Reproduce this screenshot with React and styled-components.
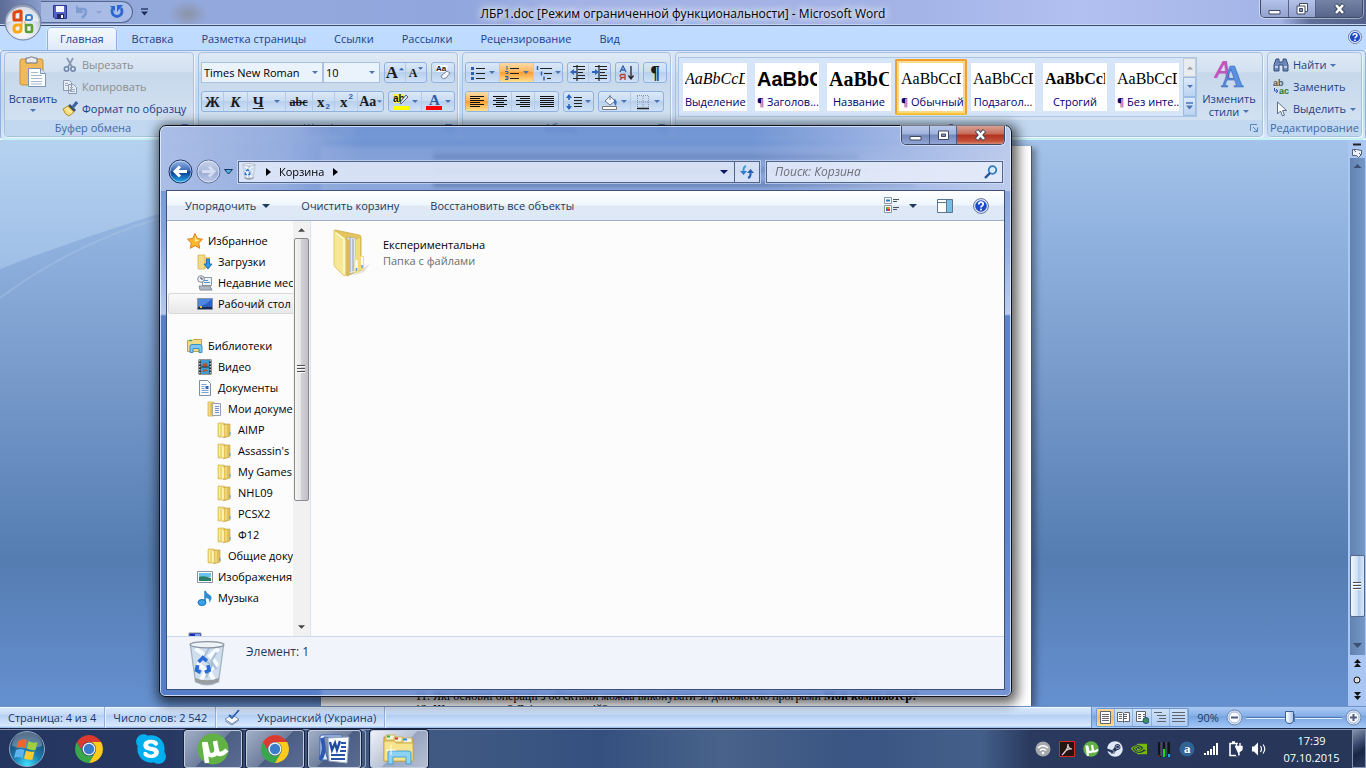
import React from "react";
import styled, { createGlobalStyle, css } from "styled-components";
import { FaSkype, FaSteam } from "react-icons/fa";
import { SiNvidia } from "react-icons/si";

const GlobalStyle = createGlobalStyle`
  * { box-sizing: border-box; }
  body {
    margin: 0;
    overflow: hidden;
    font-family: "Open Sans", "Noto Sans", sans-serif;
    font-size: 11px;
    line-height: 16px;
    color: #000;
  }
  button, input, select {
    font: inherit;
    color: inherit;
    margin: 0;
    padding: 0;
    border: 0;
    background: none;
  }
  a { color: inherit; text-decoration: none; }
  svg { display: block; flex: none; }
`;

const Desktop = styled.div`
  position: relative;
  display: flex;
  flex-direction: column;
  height: 100vh;
  overflow: hidden;
`;

/* ---------- Word ---------- */

const WordWindow = styled.main`
  flex: 1;
  min-height: 0;
  display: flex;
  flex-direction: column;
`;

const TitleBar = styled.header`
  display: flex;
  justify-content: space-between;
  align-items: flex-start;
  height: 26px;
  border-bottom: 1px solid #3b4a66;
  box-shadow: inset 0 -1px #c6d6f4;
  background:
    radial-gradient(ellipse 20px 14px at 188px 14px, #8c93a8, transparent),
    linear-gradient(90deg, #5b6c95 0, #8a9ccb 40px, #93a9dc 140px, #93a9dd 330px, #8fa5dc 450px, #a2b2e4 560px, #a3b3e6 900px, #b1c0f0 1080px, #a3b4e6 1280px, #5e6f98 1310px, #52628a 100%);
`;

const QuickBar = styled.div`
  display: flex;
  align-items: center;
  gap: 8px;
  width: 170px;
  height: 24px;
  padding-left: 41px;
`;

const QuickPill = styled.div`
  display: flex;
  align-items: center;
  gap: 8px;
  width: 92px;
  height: 22px;
  padding-left: 12px;
  border: 1px solid #57688f;
  border-left: 0;
  border-radius: 0 11px 11px 0;
  background: rgba(190, 207, 243, 0.55);
`;

const WordTitle = styled.h1`
  margin: 0;
  padding-top: 6px;
  font-size: 12px;
  font-weight: 400;
  line-height: 16px;
  white-space: nowrap;
  text-shadow: 0 0 6px #fff, 0 0 8px #dfe8ff, 0 0 10px #dfe8ff;
`;

const WordCaption = styled.div`
  display: flex;
  justify-content: flex-end;
  width: 170px;
  padding-right: 3px;
`;

const CaptionGroup = styled.div`
  display: flex;
  height: ${(p) => (p.$dark ? 18 : 19)}px;
  border: 1px solid #3d4a69;
  border-top: 0;
  border-radius: 0 0 5px 5px;
  overflow: hidden;
  box-shadow: 0 0 0 1px rgba(255, 255, 255, 0.45);
`;

const CaptionButton = styled.button`
  display: flex;
  align-items: center;
  justify-content: center;
  width: ${(p) => p.$w}px;
  border-right: 1px solid rgba(50, 62, 95, 0.7);
  background: ${(p) =>
    p.$tone === "red"
      ? "linear-gradient(#d9a093, #c66a58 45%, #b0301c 50%, #c4533a 85%, #d88a70)"
      : p.$tone === "dark"
        ? "linear-gradient(#7583a5, #56658a)"
        : p.$tone === "light"
          ? "linear-gradient(#b2c2e8, #93a3cf)"
          : "linear-gradient(#b9c8ea, #9fb1dc 45%, #7487b9 50%, #92a6d6)"};
  &:last-child { border-right: 0; }
`;

const OfficeButton = styled.button`
  position: absolute;
  left: 4px;
  top: 3px;
  width: 38px;
  height: 38px;
  border-radius: 50%;
  cursor: pointer;
`;

const Tabs = styled.nav`
  display: flex;
  gap: 4px;
  align-items: flex-end;
  height: 24px;
  padding-left: 48px;
  background: #bfdbff;
  color: #1c3f8a;
`;

const Tab = styled.a`
  height: 22px;
  padding: 3px 12px 0;
  white-space: nowrap;
  ${(p) =>
    p.$active &&
    css`
      background: linear-gradient(#f4f9ff, #dfeaf8);
      border-radius: 4px 4px 0 0;
      box-shadow: 0 0 0 1px #8db2e3, 0 0 3px 1px #fff;
      clip-path: inset(-2px -2px 0 -2px);
    `}
`;

const HelpLink = styled.a`
  margin: 0 4px 6px auto;
`;

const Ribbon = styled.section`
  display: flex;
  gap: 4px;
  height: 90px;
  padding: 1px 3px;
  border: 1px solid #8db2e3;
  border-bottom: 2px solid #c6f1f5;
  border-radius: 4px;
  background: linear-gradient(#dce7f5, #c9daed 40%, #c5d7ec 60%, #d7e6f8);
`;

const Group = styled.section`
  display: flex;
  flex-direction: column;
  flex: ${(p) => (p.$grow ? "1 1 0" : `0 0 ${p.$w}px`)};
  min-width: 0;
  border: 1px solid #a6c2e2;
  border-radius: 4px;
  box-shadow: 1px 1px 0 #eef5fd;
  background: linear-gradient(#dfe9f5, #d3e1f0 22%, #c7d8eb 24%, #d5e4f4);
  overflow: hidden;
`;

const GroupBody = styled.div`
  flex: 1;
  min-height: 0;
  display: flex;
  flex-direction: ${(p) => (p.$stack ? "column" : "row")};
  gap: ${(p) => p.$gap || 0}px;
  padding: ${(p) => p.$pad || "4px"};
`;

const GroupLabel = styled.h2`
  display: flex;
  align-items: center;
  justify-content: center;
  height: 16px;
  margin: 0;
  padding-right: ${(p) => (p.$launcher ? 4 : 0)}px;
  font-size: 11px;
  font-weight: 400;
  line-height: 14px;
  color: #3e6aaa;
  background: #c1d8f0;
  white-space: nowrap;
`;

const LabelText = styled.span`
  flex: 1;
  text-align: center;
`;

const BigButton = styled.button`
  display: flex;
  flex-direction: column;
  align-items: center;
  gap: 4px;
  width: ${(p) => p.$w}px;
  padding-top: ${(p) => p.$top}px;
  line-height: 13px;
  color: #1c3f8a;
`;

const SplitLabel = styled.span`
  display: flex;
  align-items: center;
  justify-content: center;
  gap: 4px;
`;

const CommandList = styled.div`
  display: flex;
  flex-direction: column;
`;

const Command = styled.button`
  display: flex;
  align-items: center;
  gap: 4px;
  height: 22px;
  white-space: nowrap;
  color: ${(p) => (p.disabled ? "#8d8d8d" : "#1c3f8a")};
`;

const ToolRow = styled.div`
  display: flex;
  gap: 4px;
  height: 21px;
`;

const ComboCell = styled.label`
  display: grid;
  width: ${(p) => p.$w}px;
  align-items: center;
  border: 1px solid #abc1de;
  background: #eaf2fb;
  & + & { margin-left: -4px; }
  & > * { grid-area: 1 / 1; }
  & > svg { justify-self: end; margin-right: 4px; pointer-events: none; }
`;

const Combo = styled.select`
  appearance: none;
  width: 100%;
  padding-left: 2px;
  outline: 0;
`;

const ToolSet = styled.div`
  display: flex;
  border: 1px solid #8fb2de;
  border-radius: 3px;
  background: linear-gradient(#dbe8f7, #c9dcf2 45%, #b9d0ec 50%, #cfe1f6);
  overflow: hidden;
`;

const Tool = styled.button`
  display: flex;
  align-items: center;
  justify-content: center;
  gap: ${(p) => p.$gap || 3}px;
  width: ${(p) => p.$w}px;
  font: bold ${(p) => p.$size || 15}px/18px "Liberation Serif", serif;
  color: #1b1b1b;
  border-right: 1px solid #b3cbe8;
  &:last-child { border-right: 0; }
  ${(p) => p.$on && "background: linear-gradient(#fbdca6, #fdb75c 45%, #fb9f35 50%, #fee08f);"}
`;

const SmallTwo = styled.span`
  align-self: ${(p) => (p.$up ? "flex-start" : "flex-end")};
  font: bold 8px/9px "Liberation Sans", sans-serif;
  color: #2f60ad;
`;

const RaisedArrow = styled.span`
  align-self: flex-start;
  padding-top: 4px;
`;

const Gallery = styled.div`
  display: flex;
  flex: 1;
  min-width: 0;
  height: 60px;
  border: 1px solid #a9c6e8;
  background: #d6e6f8;
`;

const StyleCell = styled.button`
  flex: 0 0 72px;
  min-width: 0;
  height: 56px;
  margin-top: 1px;
  padding: ${(p) => (p.$on ? "2px 2px" : "3px 3px")};
  border: ${(p) => (p.$on ? "2px solid #f0a02c" : "1px solid transparent")};
  border-radius: 2px;
  border-bottom-color: ${(p) => (p.$on ? "#fbc832" : "transparent")};
  background: ${(p) => (p.$on ? "#fdd98a" : "none")};
`;

const StyleTile = styled.span`
  display: flex;
  flex-direction: column;
  justify-content: space-between;
  height: 100%;
  overflow: hidden;
  padding: 0 2px;
  background: #fff;
`;

const Preview = styled.span`
  height: 30px;
  overflow: hidden;
  white-space: nowrap;
  text-align: left;
  font: ${(p) => p.$font};
  line-height: 32px;
`;

const StyleName = styled.span`
  font-size: 11px;
  line-height: 18px;
  white-space: nowrap;
  text-align: center;
  color: #00006d;
`;

const GalleryScroll = styled.div`
  display: flex;
  flex-direction: column;
  width: 15px;
  margin-left: auto;
`;

const GalleryStep = styled.button`
  flex: 1;
  display: flex;
  align-items: center;
  justify-content: center;
  border: 1px solid ${(p) => (p.disabled ? "#c9cdd3" : "#9dbce3")};
  background: ${(p) => (p.disabled ? "#e8ebef" : "linear-gradient(#dbe9fa, #bbd3f1)")};
`;

const DocumentArea = styled.section`
  flex: 1;
  min-height: 0;
  display: grid;
  grid-template-columns: 321fr 711fr 316fr 18px;
  background: linear-gradient(#a4c3ea, #8fb1de 18%, #7497c8 45%, #557db2 74%, #6590cf);
`;

const Waves = styled.svg`
  width: 100%;
  height: 200px;
`;

const Page = styled.article`
  display: flex;
  flex-direction: column;
  justify-content: flex-end;
  margin-top: 6px;
  overflow: hidden;
  border-right: 1px solid #555;
  box-shadow: 4px 2px 6px rgba(0, 0, 0, 0.35);
  background:
    linear-gradient(#777, #777) 112px 5px / 68% 1px no-repeat,
    linear-gradient(#777, #777) 112px 9px / 60% 4px no-repeat,
    linear-gradient(#888, #888) 112px 22px / 75% 4px no-repeat,
    linear-gradient(#666, #666) 112px 36px / 68% 5px no-repeat,
    #fff;
`;

const Questions = styled.ol`
  margin: 0 0 -10px;
  padding-left: 112px;
  font: 12px/13px "Liberation Serif", serif;
  white-space: nowrap;
`;

const VerticalScroll = styled.div`
  grid-column: 4;
  display: flex;
  flex-direction: column;
  align-items: center;
  background: #a9c7f2;
`;

const ScrollTrack = styled.div`
  flex: 1;
  display: flex;
  flex-direction: column;
  align-items: center;
  width: 15px;
  padding: 6px 0;
  background: linear-gradient(90deg, #6283b1, #7598c8);
`;

const DocThumb = styled.div`
  display: flex;
  align-items: center;
  justify-content: center;
  width: 15px;
  height: 62px;
  margin-top: auto;
  border: 1px solid #52688f;
  border-radius: 2px;
  background: linear-gradient(90deg, #eef5fd, #d0e0f4 50%, #b0cbec 55%, #dbe9f9);
`;

const BrowseButtons = styled.div`
  display: flex;
  flex-direction: column;
  align-items: center;
  gap: 8px;
  height: 51px;
  padding-top: 4px;
`;

const StatusBar = styled.footer`
  display: flex;
  align-items: stretch;
  height: 22px;
  line-height: 20px;
  color: #1b3766;
  white-space: nowrap;
  border-top: 1px solid #6e93c8;
  box-shadow: inset 0 1px #eef6ff;
  background: linear-gradient(#d9e8fb, #c7dcf8 35%, #b4d0f5 40%, #d9e9fd 90%, #8fb4e4);
`;

const StatusCell = styled.div`
  display: flex;
  align-items: center;
  gap: 16px;
  padding: 0 8px;
  border-right: 1px solid #8fb0dd;
  box-shadow: 1px 0 #eaf3ff;
`;

const StatusControls = styled.div`
  display: flex;
  align-items: center;
  gap: 4px;
  margin-left: auto;
  width: 275px;
  padding-left: 4px;
  border-left: 1px solid #6c93ca;
  background: linear-gradient(#a9c9f3, #88b1e8 40%, #78a5e2 45%, #a4c8f5);
`;

const ViewSet = styled.div`
  display: flex;
  width: 93px;
  height: 19px;
  border: 1px solid #6f97d0;
  border-radius: 2px;
  overflow: hidden;
`;

const ViewButton = styled.button`
  flex: 1;
  display: flex;
  align-items: center;
  justify-content: center;
  border-right: 1px solid #8eb2e0;
  background: ${(p) => (p.$on ? "linear-gradient(#fbd9a0, #fdbb60 50%, #fee38f)" : "linear-gradient(#cfe1f8, #b0cdf2)")};
`;

const ZoomText = styled.button`
  width: 30px;
  color: #1b3766;
`;

const RoundButton = styled.button`
  display: flex;
  margin: 0 -1px;
`;

const ZoomSlider = styled.input`
  appearance: none;
  width: 96px;
  height: 18px;
  outline: 0;
  background:
    linear-gradient(#4d74ad, #4d74ad) 50% 50% / 1px 8px no-repeat,
    linear-gradient(#4d74ad 50%, #e6f1ff 50%) 50% 50% / 100% 2px no-repeat;
  &::-webkit-slider-thumb {
    appearance: none;
    width: 9px;
    height: 13px;
    border: 1px solid #3d5f96;
    border-radius: 1px 1px 5px 5px;
    background: linear-gradient(90deg, #fff, #a9c5ea);
  }
`;

/* ---------- Explorer ---------- */

const ExplorerWindow = styled.section`
  position: absolute;
  inset: 125px 354px 71px 159px;
  display: flex;
  flex-direction: column;
  padding: 0 6px 6px;
  border: 1px solid #10131f;
  border-radius: 7px 7px 6px 6px;
  box-shadow: inset 0 0 0 1px rgba(235, 243, 255, 0.75), 2px 3px 12px 4px rgba(0, 0, 0, 0.6);
  backdrop-filter: blur(2px);
  background:
    linear-gradient(100deg, rgba(190, 203, 236, 0.75) 0, rgba(170, 187, 228, 0.6) 130px, rgba(110, 145, 210, 0) 200px) 0 0 / 100% 65px no-repeat,
    linear-gradient(260deg, rgba(200, 212, 240, 0.85) 0, rgba(180, 196, 236, 0.7) 110px, rgba(110, 145, 210, 0) 260px) 0 0 / 100% 65px no-repeat,
    linear-gradient(rgba(100, 137, 206, 0.85), rgba(100, 137, 206, 0.75) 64px, rgba(140, 168, 224, 0.9) 120px, rgba(185, 203, 238, 0.95) 188px, rgba(86, 126, 198, 0.95) 190px, rgba(84, 124, 197, 0.95) 400px, rgba(84, 122, 200, 0.8));
`;

const ExplorerCaption = styled.div`
  display: flex;
  justify-content: flex-end;
  align-items: flex-start;
  height: 34px;
`;

const AddressRow = styled.div`
  display: flex;
  align-items: center;
  gap: 6px;
  height: 23px;
  margin-bottom: 7px;
  padding: 0 2px;
`;

const NavButtons = styled.div`
  display: flex;
  align-items: center;
  width: 64px;
  gap: 3px;
`;

const AddressBox = styled.div`
  flex: 7 1 0;
  display: flex;
  align-items: center;
  height: 22px;
  border: 1px solid #52648c;
  box-shadow: 0 0 0 1px rgba(220, 230, 250, 0.6);
  background: rgba(232, 238, 251, 0.82);
`;

const Crumb = styled.button`
  display: flex;
  align-items: center;
  gap: 9px;
  padding-left: ${(p) => p.$pad || 0}px;
`;

const HistoryButton = styled.button`
  display: flex;
  margin-left: auto;
  padding: 4px 6px;
`;

const RefreshButton = styled.button`
  display: flex;
  align-items: center;
  justify-content: center;
  width: 25px;
  height: 20px;
  border-left: 1px solid #52648c;
`;

const SearchBox = styled.label`
  flex: 3 1 0;
  display: flex;
  align-items: center;
  height: 22px;
  padding: 0 4px 0 8px;
  border: 1px solid #52648c;
  box-shadow: 0 0 0 1px rgba(220, 230, 250, 0.6);
  background: rgba(234, 240, 252, 0.85);
`;

const SearchInput = styled.input`
  flex: 1;
  min-width: 0;
  outline: 0;
  font-size: 12px;
  font-style: italic;
  &::placeholder { color: #6d6f78; opacity: 1; }
`;

const ExplorerContent = styled.div`
  flex: 1;
  min-height: 0;
  display: flex;
  flex-direction: column;
  border: 1px solid #3e5076;
  background: #fcfcfc;
`;

const CommandBar = styled.div`
  display: flex;
  align-items: center;
  gap: 31px;
  height: 30px;
  padding: 0 15px 0 18px;
  color: #1e395b;
  white-space: nowrap;
  border-bottom: 1px solid #a0afc3;
  background: linear-gradient(#fff, #eef6fc 48%, #dfe9f6 52%, #dde8f6);
`;

const BarButton = styled.button`
  display: flex;
  align-items: center;
  gap: ${(p) => p.$gap || 6}px;
  white-space: nowrap;
`;

const BarTools = styled.div`
  display: flex;
  align-items: center;
  gap: 20px;
  margin-left: auto;
`;

const Panes = styled.div`
  flex: 1;
  min-height: 0;
  display: flex;
`;

const TreePane = styled.nav`
  display: flex;
  width: 144px;
  border-right: 1px solid #d6e5f5;
`;

const Tree = styled.ul`
  flex: 1;
  min-width: 0;
  margin: 0;
  padding: 9px 0 0;
  overflow: hidden;
  list-style: none;
`;

const TreeItem = styled.li`
  height: 21px;
  margin-top: ${(p) => (p.$section ? 21 : 0)}px;
`;

const TreeLink = styled.a`
  display: flex;
  align-items: center;
  gap: 5px;
  height: 21px;
  margin-left: 1px;
  padding-left: ${(p) => 18 + p.$level * 10}px;
  white-space: nowrap;
  border: 1px solid ${(p) => (p.$on ? "#d9d9d9" : "transparent")};
  border-right: 0;
  border-radius: 3px 0 0 3px;
  background: ${(p) => (p.$on ? "linear-gradient(#fafafa, #e8e8e8)" : "none")};
`;

const PaneScroll = styled.div`
  display: flex;
  flex-direction: column;
  align-items: center;
  width: 17px;
  padding: 7px 1px 7px 0;
  background: #f1f1f1;
`;

const PaneThumb = styled.div`
  display: flex;
  align-items: center;
  justify-content: center;
  width: 15px;
  height: 263px;
  margin: 6px 0 auto;
  border: 1px solid #8b8b8f;
  border-radius: 2px;
  background: linear-gradient(90deg, #f6f6f6, #e6e6e9 45%, #d0d0d5 50%, #c0c0c6);
`;

const Files = styled.div`
  flex: 1;
  min-width: 0;
  padding: 7px 0 0 21px;
`;

const FileItem = styled.button`
  display: flex;
  align-items: flex-start;
  gap: 11px;
  text-align: left;
`;

const FileText = styled.span`
  display: flex;
  flex-direction: column;
  padding-top: 9px;
`;

const FileType = styled.span`
  color: #6d6d6d;
`;

const DetailsPane = styled.footer`
  display: flex;
  gap: 20px;
  height: 53px;
  padding: 3px 0 0 21px;
  font-size: 12px;
  color: #1e395b;
  border-top: 1px solid #ccd9ea;
  background: #f1f5fb;
`;

const DetailsText = styled.p`
  margin: 0;
  padding-top: 4px;
`;

/* ---------- Taskbar ---------- */

const TaskBar = styled.footer`
  display: flex;
  align-items: center;
  gap: 4px;
  height: 40px;
  padding-left: 7px;
  border-top: 1px solid #1a2340;
  box-shadow: inset 0 1px #7f96b8;
  background: linear-gradient(90deg, #24365f, #273963 170px, #40587f 300px, #3f5983 460px, #35507f 600px, #48628a 720px, #3a5483 860px, #44608a 980px, #2a3a5e 1030px, #27365a 1200px, #273758);
`;

const StartButton = styled.button`
  width: 49px;
`;

const TaskButton = styled.button`
  display: flex;
  align-items: center;
  justify-content: center;
  width: ${(p) => p.$w || 58}px;
  height: 38px;
  border-radius: 3px;
  ${(p) =>
    p.$open &&
    css`
      border: 1px solid #c3cde0;
      box-shadow: 0 0 0 1px #17223e;
      background: ${p.$active
        ? "linear-gradient(135deg, #eff2f7, #b9c3d6 50%, #98a5bf 51%, #b4bfd2)"
        : "linear-gradient(135deg, #a3afc8, #6d7d9b 50%, #4d5e84 51%, #5b6c92)"};
    `}
`;

const TaskStack = styled.div`
  display: flex;
  padding-right: 4px;
  height: 38px;
  border: 1px solid #97a4c0;
  border-left: 0;
  border-radius: 0 3px 3px 0;
  & > button { margin: -1px 0; }
`;

const Tray = styled.div`
  display: flex;
  align-items: center;
  height: 100%;
  margin-left: auto;
`;

const TrayButton = styled.button`
  display: flex;
  align-items: center;
  justify-content: center;
  width: 24px;
  height: 24px;
`;

const Clock = styled.time`
  width: 81px;
  text-align: center;
  line-height: 17px;
  color: #fff;
`;

const ShowDesktop = styled.button`
  width: 14px;
  height: 100%;
  border: 1px solid #8494b0;
  background: linear-gradient(150deg, #8492ab, #35456a 40%, #1a2644 60%, #2b3a60);
`;

/* ---------- Drawings ---------- */

const Icon = ({ w = 16, h = w, box, children }) => (
  <svg width={w} height={h} viewBox={box || `0 0 ${w} ${h}`} fill="none" aria-hidden="true">
    {children}
  </svg>
);

const Arrow = ({ color = "#4a74b4", w = 6 }) => (
  <Icon w={w} h={Math.ceil(w / 2)} box="0 0 6 3">
    <path d="M0 0h6L3 3z" fill={color} />
  </Icon>
);

const ArrowUp = ({ color = "#444", w = 7 }) => (
  <Icon w={w} h={4} box="0 0 8 4">
    <path d="M4 0l4 4H0z" fill={color} />
  </Icon>
);

const BarArrow = ({ color = "#4a74b4" }) => (
  <Icon w={7} h={8}>
    <path d="M0 1h7" stroke={color} strokeWidth="1.3" />
    <path d="M0 3.5h7L3.5 7.5z" fill={color} />
  </Icon>
);

const Grip = () => (
  <Icon w={8} h={9}>
    <path d="M0 .5h8M0 3.5h8M0 6.5h8" stroke="#4b4b50" />
    <path d="M0 1.5h8M0 4.5h8M0 7.5h8" stroke="#fff" />
  </Icon>
);

const OfficeLogo = () => (
  <Icon w={38} h={38}>
    <defs>
      <radialGradient id="orb" cx="50%" cy="75%" r="70%">
        <stop offset="0" stopColor="#fff" />
        <stop offset=".55" stopColor="#dde3ee" />
        <stop offset="1" stopColor="#8d9bb8" />
      </radialGradient>
    </defs>
    <circle cx="19" cy="19" r="18" fill="url(#orb)" stroke="#6b7b9d" />
    <path d="M3 19a16 15 0 0 1 32 0q-16-5-32 0z" fill="#fff" opacity=".6" />
    <path d="M17 17h-6a1 1 0 0 1-1-1v-5a2 2 0 0 1 2-2l4-1q1 0 1 1z" stroke="#dd4a12" strokeWidth="3.2" />
    <path d="M22 17h4q2 0 2-2v-1q0-2-2-2h-2q-2 0-2 2z" stroke="#3987cf" strokeWidth="2" />
    <path d="M17 22h-4q-3 0-3 3v1q0 3 3 3h1q3 0 3-3z" stroke="#f6a915" strokeWidth="3" />
    <path d="M22 22h5q1 0 1 1v5q0 1-1 1h-4q-1 0-1-1z" stroke="#5d9e36" strokeWidth="2.6" />
    <path d="M17.5 19.5h1m2 0h1" stroke="#e8821a" strokeWidth="2" />
  </Icon>
);

const SaveIcon = () => (
  <Icon w={14}>
    <path d="M.5.5h13v13H2L.5 12z" fill="#5462c4" stroke="#2b3590" />
    <path d="M3 1h8v6H3z" fill="#f3f6ff" />
    <path d="M4 9h7v5H4z" fill="#23276c" />
    <path d="M8 10h2v3H8z" fill="#fff" />
  </Icon>
);

const UndoIcon = () => (
  <Icon w={13} h={14}>
    <path d="M3 4h5q3 0 3 3t-4 6" stroke="#7e9bd2" strokeWidth="2.6" />
    <path d="M1 0v8h8z" fill="#7e9bd2" />
  </Icon>
);

const RedoIcon = () => (
  <Icon w={14}>
    <path d="M3 3q-2 3 0 6.5 4 4 8 0 2-3 0-6.500" stroke="#2d67d0" strokeWidth="2.8" />
    <path d="M7 0h6l-6 7z" fill="#2d67d0" />
    <path d="M0 1h5v5z" fill="#2d67d0" />
  </Icon>
);

const HelpIcon = ({ w = 14 }) => (
  <Icon w={w} box="0 0 16 16">
    <circle cx="8" cy="8" r="7.4" fill="#e8eefc" stroke="#5c6f9c" />
    <circle cx="8" cy="8" r="5.8" fill="#1e4bc4" />
    <path d="M5.8 6.4q0-2.2 2.2-2.2t2.2 2q0 1-1.1 1.7t-1.1 1.5" stroke="#fff" strokeWidth="1.7" />
    <circle cx="8" cy="11.6" r="1" fill="#fff" />
  </Icon>
);

const MinGlyph = () => (
  <Icon w={13} h={12}>
    <path d="M1 7.5h11v3.5H1z" fill="#fff" stroke="#3f4861" />
  </Icon>
);

const MaxGlyph = () => (
  <Icon w={13} h={11}>
    <path d="M1.5 1h10v8.5h-10z" fill="#fff" stroke="#3f4861" />
    <path d="M4.5 4h4v2.5h-4z" fill="#7f90be" stroke="#3f4861" />
  </Icon>
);

const RestoreGlyph = () => (
  <Icon w={13} h={12}>
    <path d="M3.5.5h8v8h-8z" fill="#fff" stroke="#3f4861" />
    <path d="M1 3h8v8H1z" fill="#fff" stroke="#3f4861" />
    <path d="M3.5 5.5h3v3h-3z" fill="#7f90be" stroke="#3f4861" />
  </Icon>
);

const CloseGlyph = () => (
  <Icon w={13} h={12}>
    <path d="M2.5 1.5l8 9m0-9l-8 9" stroke="#3f4861" strokeWidth="4.4" />
    <path d="M3 2l7 8m0-8l-7 8" stroke="#fff" strokeWidth="2.6" />
  </Icon>
);

const PasteIcon = () => (
  <Icon w={28} h={32}>
    <rect x="1" y="3" width="23" height="26" rx="2" fill="#f0b95a" stroke="#c98f38" />
    <path d="M7 2h3a3 2.5 0 0 1 5 0h3v5H7z" fill="#e9ecf1" stroke="#6e7480" />
    <path d="M9.5 12.5h12l5 5v13h-17z" fill="#fdfeff" stroke="#7d93b4" />
    <path d="M21.5 12.5v5h5" fill="#d7e2f2" stroke="#7d93b4" />
    <path d="M12 16.5h7m-7 3h11m-11 3h11m-11 3h11m-11 2.5h11" stroke="#a9b7cb" />
  </Icon>
);

const CutIcon = () => (
  <Icon>
    <path d="M5 1l5 9M11 1L6 10" stroke="#8b9ab2" strokeWidth="1.8" />
    <circle cx="4.5" cy="12" r="2.2" stroke="#7287ad" strokeWidth="1.6" />
    <circle cx="11" cy="12" r="2.2" stroke="#7287ad" strokeWidth="1.6" />
  </Icon>
);

const CopyIcon = () => (
  <Icon>
    <path d="M1.5 1.5h6l2 2v8h-8zM6.5 5.5h5l3 3v6h-8z" fill="#e6ecf4" stroke="#8b9bb5" />
    <path d="M3 4.5h3m-3 2h3m2 2h3m-3 2h5m-5 2h5" stroke="#9fadc3" />
  </Icon>
);

const BrushIcon = () => (
  <Icon>
    <path d="M15 1l-4 5" stroke="#3a62a8" strokeWidth="3" />
    <path d="M8 3l6 6-2 2-6-6z" fill="#39506f" />
    <path d="M6 5l6 6-5 4q-4-1-6-7z" fill="#f5dd79" stroke="#b28b2a" />
    <path d="M4 7l6 5" stroke="#fff6cc" />
  </Icon>
);

const ClearFormatIcon = () => (
  <Icon w={17}>
    <path d="M1.5 1h11v7h-11z" fill="#f8fbff" />
    <text x="1" y="7" fontSize="8" fill="#222" fontFamily="Liberation Sans">Aa</text>
    <path d="M7 11l5-4 3 2-4 5q-3 2-5-1z" fill="#f7f7fb" stroke="#77809a" />
  </Icon>
);

const ListIcon = ({ kind }) => (
  <Icon>
    {kind === "multi" ? (
      <>
        <path d="M4 3.5h12M8 8.5h8M11 13.5h4" stroke="#222" />
        <path d="M1.5 1v4M5.500 6.500v4M8 11.500v4" stroke="#2f60ad" strokeWidth="1.5" />
      </>
    ) : (
      <>
        <path d="M6 3.5h9M6 8.5h9M6 13.5h9" stroke="#222" strokeWidth="1.2" />
        {kind === "number" ? (
          <path d="M3 1v4M1 6.5h3v2H2M1 11.5h3v3H1m1-1.5h2" stroke="#2f60ad" />
        ) : (
          <path d="M1 2h3v3H1zM1 7h3v3H1zM1 12h3v3H1z" fill="#2f60ad" />
        )}
      </>
    )}
  </Icon>
);

const IndentIcon = ({ flip }) => (
  <Icon>
    <path d="M3 1.5h12M8 4.5h7M8 7.5h5M8 10.5h7M3 13.5h12M7 0v16" stroke="#222" strokeWidth="1.2" />
    {flip ? <path d="M0 7l4-3v2h3v2H4v2z" fill="#2a63c0" /> : <path d="M7 7L3 4v2H0v2h3v2z" fill="#2a63c0" />}
  </Icon>
);

const AlignIcon = ({ rows }) => (
  <Icon w={14} h={13}>
    {rows.map(([x, w], i) => (
      <path key={i} d={`M${x} ${i * 2 + 1.5}h${w}`} stroke="#111" />
    ))}
  </Icon>
);

const SortIcon = () => (
  <Icon>
    <path d="M1 7l3-6 3 6M2 5h4" stroke="#2f60ad" strokeWidth="1.3" />
    <path d="M6 15V9.5H3q-2 0-2 1.5t2 1.5h3m-3 0l-2 2.5" stroke="#b4413c" strokeWidth="1.3" />
    <path d="M12 1v12M9.5 10.5l2.5 3.5 2.5-3.5" stroke="#222" strokeWidth="1.3" />
  </Icon>
);

const SpacingIcon = () => (
  <Icon>
    <path d="M3 1v5m0 4v5" stroke="#2a63c0" strokeWidth="1.6" />
    <path d="M0 4l3-4 3 4zM0 12l3 4 3-4z" fill="#2a63c0" />
    <path d="M8 3.5h8M8 6.5h8M8 9.5h8M8 12.5h8" stroke="#222" />
  </Icon>
);

const FillIcon = () => (
  <Icon>
    <path d="M3 7l5-5 5 5-5 4z" fill="#f3f6fb" stroke="#6b7a92" />
    <path d="M8 1v5" stroke="#6b7a92" />
    <path d="M12 5q4 1 2 7-2-1-2-5z" fill="#356fc6" />
    <path d="M.5 12.5h14v3H.5z" fill="#fff" stroke="#777" />
  </Icon>
);

const BorderIcon = () => (
  <Icon>
    <path d="M2 1.5h12M2 8h12M2.5 2v12M8 2v12M13.5 2v12" stroke="#8a96a8" strokeDasharray="1 1" />
    <path d="M2 14.5h12" stroke="#222" strokeWidth="1.4" />
  </Icon>
);

const HighlightIcon = () => (
  <Icon>
    <path d="M0 0h11v9H0z" fill="#f8f04d" />
    <text x="0" y="8" fontSize="10" fill="#111" fontFamily="Liberation Sans">ab</text>
    <path d="M15 3L9 9l-2 1 1-3 5-6z" fill="#dfe7f2" stroke="#55657e" />
    <path d="M0 12h16v4H0z" fill="#ffff00" />
  </Icon>
);

const FontColorIcon = () => (
  <Icon>
    <text x="3" y="11" fontSize="15" fontWeight="700" fill="#2f5ba5" fontFamily="Liberation Serif">A</text>
    <path d="M0 12h16v4H0z" fill="#f00" />
  </Icon>
);

const ChangeStylesIcon = () => (
  <Icon w={30} h={29}>
    <text x="0" y="19" fontSize="24" fontWeight="700" fill="#c254bd" fontFamily="Liberation Sans" fontStyle="italic">A</text>
    <text x="7" y="28" fontSize="31" fontWeight="700" fill="#5b90e2" stroke="#3467b4" strokeWidth=".6" fontFamily="Liberation Serif">A</text>
  </Icon>
);

const FindIcon = () => (
  <Icon>
    <path d="M3 2h3v3h4V2h3l2 6v6h-5V8H6v6H1V8z" fill="#6d89b9" stroke="#34507f" />
    <path d="M2 10h3m6 0h3" stroke="#dbe6f7" strokeWidth="1.5" />
  </Icon>
);

const ReplaceIcon = () => (
  <Icon>
    <text x="0" y="7" fontSize="9" fontWeight="700" fill="#555" fontFamily="Liberation Sans">ab</text>
    <text x="6" y="15" fontSize="9" fontWeight="700" fill="#1e7c2c" fontFamily="Liberation Sans">ac</text>
    <path d="M1.5 9v3h3M3 10l2 2-2 2" stroke="#2f60ad" />
  </Icon>
);

const SelectIcon = () => (
  <Icon>
    <path d="M4.5 1v12l3-3 2 5 2-1-2-4.5h4z" fill="#fff" stroke="#596b8c" />
  </Icon>
);

const LauncherIcon = () => (
  <Icon w={8}>
    <path d="M.5 7V.5H7" stroke="#5d86bd" />
    <path d="M3 3l4 4M7.5 3.5v4h-4" stroke="#5d86bd" />
  </Icon>
);

const RulerIcon = () => (
  <Icon w={12} h={18}>
    <path d="M2 4.5h8" stroke="#222" strokeWidth="2" />
    <path d="M1.5 9.5h4l5 1v4l-3 3-2-2h-4z" fill="#eef3fb" stroke="#565f72" />
    <path d="M2 9l3 3m3 1l2 2" stroke="#565f72" />
  </Icon>
);

const ProofIcon = () => (
  <Icon w={17}>
    <path d="M1 10l7-4 7 4-7 5z" fill="#f4f7fc" stroke="#7f90b0" />
    <path d="M1 12l7 4 7-5" stroke="#7f90b0" />
    <path d="M5 6l3 3 7-8" stroke="#2a5fb8" strokeWidth="1.8" />
  </Icon>
);

const VIEW_LINES = {
  outline: "M0 1.5h8M3 4.5h9M5 7.5h7M3 10.5h9",
  draft: "M0 1.5h13M0 4.5h13M0 7.5h13M0 10.5h13",
  page: "M3 3.5h7M3 5.5h7M3 7.5h7M3 9.5h7",
};

const ViewIcon = ({ kind }) => (
  <Icon w={13} h={13}>
    {kind === "page" && <path d="M1.5.5h10v12h-10z" fill="#fff" stroke="#5d6470" />}
    {kind === "read" && <path d="M.5 1.5h5l1 1 1-1h5v9h-5l-1 1-1-1h-5zM6.5 2v9" fill="#fff" stroke="#5d6470" />}
    {kind === "web" && <path d="M.5.5h9v10h-9z" fill="#fff" stroke="#5d6470" />}
    <path d={VIEW_LINES[kind] || "M2 3.5h3m2 0h3M2 5.5h3m2 0h3M2 7.5h3m2 0h3"} stroke="#5d6470" />
    {kind === "web" && <circle cx="10" cy="9.5" r="3" fill="#3a8f5c" stroke="#25549c" />}
  </Icon>
);

const ZoomIcon = ({ plus }) => (
  <Icon w={17}>
    <circle cx="8.5" cy="8.5" r="7.5" fill="#dbe7f8" stroke="#6b84ad" />
    <circle cx="8.5" cy="8.5" r="5.5" fill="#f7faff" stroke="#9db1d2" />
    <path d={plus ? "M5 8.5h7M8.5 5v7" : "M5 8.5h7"} stroke="#4d5d7a" strokeWidth="2" />
  </Icon>
);

const BackIcon = ({ muted }) => (
  <Icon w={25}>
    <defs>
      <linearGradient id={muted ? "fwd" : "back"} x2="0" y2="1">
        <stop offset="0" stopColor={muted ? "#c8d4ec" : "#9cb9e8"} />
        <stop offset=".48" stopColor={muted ? "#a9b9dc" : "#3766b8"} />
        <stop offset=".52" stopColor={muted ? "#9aabd4" : "#0b3a94"} />
        <stop offset="1" stopColor={muted ? "#bccbe9" : "#25b0f0"} />
      </linearGradient>
    </defs>
    <circle cx="12.5" cy="12.5" r="11.5" fill={`url(#${muted ? "fwd" : "back"})`} stroke={muted ? "#5d6f99" : "#1c2f5e"} />
    <circle cx="12.5" cy="12.5" r="10.5" stroke="#fff" opacity=".5" />
    <path
      d={muted ? "M6 12.5h11M13 7.5l5 5-5 5" : "M19 12.5H8M12 7.5l-5 5 5 5"}
      stroke={muted ? "#d3ddf1" : "#fff"}
      strokeWidth="3"
    />
  </Icon>
);

const BinIcon = ({ w = 16, h = w }) => (
  <Icon w={w} h={h} box="0 0 36 44">
    <path d="M2 4l5 36q11 6 22 0l5-36z" fill="#cfdeed" stroke="#a3b0bf" strokeWidth="1.2" />
    <path d="M7 8l8 6-5 9 7 6-5 10M29 8l-8 7 6 8-7 7 5 9" stroke="#f6fbff" strokeWidth="4" />
    <path d="M20 8l-6 10 9 6-6 12M27 12l-5 8 5 8" stroke="#a9bfd8" strokeWidth="2" />
    <ellipse cx="18" cy="4.5" rx="16" ry="3" fill="#eef3f8" stroke="#8b95a1" strokeWidth="1.2" />
    <path d="M6.5 36q11.500 5 23 0l-.5 4q-11 5-22 0z" fill="#9a9ea3" />
    <path d="M10 21l4-4 4 3M19 24l1 5-4 2M12 31l-4-2 1-5" stroke="#2a6cd6" strokeWidth="3.5" />
  </Icon>
);

const CrumbArrow = () => (
  <Icon w={5} h={8}>
    <path d="M0 0l5 4-5 4z" fill="#000" />
  </Icon>
);

const RefreshIcon = () => (
  <Icon>
    <path d="M7 2Q4 3 4.5 8" stroke="#3a9ad9" strokeWidth="2" />
    <path d="M1 7h7L4.5 11z" fill="#2a80cc" />
    <path d="M9 14q3-1 2.500-6" stroke="#2560b4" strokeWidth="2" />
    <path d="M8 9h7l-3.500-4z" fill="#2560b4" />
  </Icon>
);

const SearchIcon = () => (
  <Icon w={14}>
    <circle cx="8.500" cy="5" r="3.800" fill="#dcecfb" stroke="#2f7cc2" strokeWidth="1.800" />
    <path d="M6 8l-5 5" stroke="#254f9a" strokeWidth="2.400" />
  </Icon>
);

const ViewsIcon = () => (
  <Icon w={17}>
    <path d="M1.5.5h7v6h-7zM1.5 8.5h7v7h-7z" fill="#fff" stroke="#8b95a3" />
    <path d="M3 2.5h4v2H3z" fill="#2b7bb4" />
    <path d="M3 10h2v2H3z" fill="#3c3" />
    <path d="M5 10h2v2H5z" fill="#e83" />
    <path d="M3 12h2v2H3z" fill="#36c" />
    <path d="M5 12h2v2H5z" fill="#d33" />
    <path d="M10 2.5h6M10 4.5h4M10 10.5h6M10 12.5h4" stroke="#4a5360" />
  </Icon>
);

const PreviewIcon = () => (
  <Icon w={16} h={14}>
    <path d="M.5.5h15v13H.5z" fill="#fff" stroke="#5b7595" />
    <path d="M10 1h5v12h-5z" fill="#78bfe4" />
    <path d="M1 3.5h9M9.5 1v12" stroke="#5b7595" />
  </Icon>
);

const Folder = ({ w = 16 }) => (
  <Icon w={w} box="0 0 16 16">
    <path d="M1 1h6l1 1v13H1z" fill="#efd977" stroke="#d2b251" strokeWidth=".6" />
    <path d="M7 2h6v12l-5 1.500L6.500 16V3z" fill="#e2c05a" stroke="#c19f3e" strokeWidth=".6" />
    <path d="M5 2l2 1.500V15L5 14z" fill="#fbf0b0" />
    <path d="M9 3v11" stroke="#f3dc86" strokeWidth="1.5" />
    <path d="M2.5 2v11" stroke="#faeea8" />
    <path d="M13 10v3" stroke="#55a0d8" />
  </Icon>
);

const BigFolder = () => (
  <Icon w={40} h={50}>
    <path d="M28 42l10-6-6 8-12 4z" fill="#d9d9d9" opacity=".7" />
    <path d="M3 2l24 5q2 0 2 3v32l-14 6z" fill="#e6c65c" stroke="#cda945" strokeWidth=".8" />
    <path d="M15 9l9 1v34l-9 3z" fill="#e3e6ea" stroke="#a6a690" strokeWidth=".7" />
    <path d="M18 10v34M21 11v32" stroke="#8f9bb0" />
    <path d="M2 2l10 7q2 1 2 4v33q0 3-3 1L3 39q-1-1-1-3z" fill="#f8e796" stroke="#dcbf58" strokeWidth=".8" />
    <path d="M4 5l8 6v35" stroke="#fffad2" strokeWidth="1.5" />
    <path d="M15 11l3 1v34l-3 2z" fill="#d9bd57" />
    <path d="M24 12l4-2v32l-4 4z" fill="#f3dc7c" />
    <path d="M24.5 31v14M30 28v14" stroke="#f3dc7c" strokeWidth="4" />
    <path d="M24.5 32v11M30 29v11" stroke="#fff" strokeWidth="2" />
    <path d="M24.5 40v3M30 37v3" stroke="#4e9ddb" strokeWidth="1.5" />
  </Icon>
);

const StarIcon = () => (
  <Icon>
    <path d="M8 .5l2.3 5 5.2.7-3.800 3.700 1 5.400L8 12.700l-4.700 2.600 1-5.400L.5 6.200l5.200-.7z" fill="#fbb82b" stroke="#e07c1d" />
    <path d="M8 3l1.5 3.5 3 .5L8 9z" fill="#fff0a0" />
  </Icon>
);

const DownloadsIcon = () => (
  <Icon>
    <path d="M1 1h7v14H1z" fill="#f1dc85" stroke="#cfae4c" strokeWidth=".7" />
    <path d="M8 3h5v11H7z" fill="#e8ca66" />
    <path d="M9.5 5h3v5H15l-4 5-4-5h2.5z" fill="#2f9be8" stroke="#1560a8" strokeWidth=".8" />
  </Icon>
);

const RecentIcon = () => (
  <Icon>
    <path d="M5.5 2.5h9v8h-9z" fill="#eef3f9" stroke="#8d97a5" />
    <path d="M7 5.5h4m-4 2h6" stroke="#4f94cf" />
    <path d="M2 11h11l2 4H3z" fill="#b0b8c3" stroke="#858d98" />
    <circle cx="4" cy="4" r="3.3" fill="#f4f6f9" stroke="#7c8796" />
    <path d="M4 2v2h2" stroke="#445" />
  </Icon>
);

const MonitorIcon = () => (
  <Icon>
    <path d="M.5 2.5h15v11H.5z" fill="#2a5fc4" stroke="#8a94a6" />
    <path d="M1 3h14l-6 5-8 3z" fill="#4f88e2" />
    <path d="M1 11h14v2H1z" fill="#1c2b52" />
    <path d="M3 10h2v2H3z" fill="#e5c44a" />
  </Icon>
);

const LibraryIcon = () => (
  <Icon>
    <path d="M.5 2.5h5l1-1h8v12H.5z" fill="#f1dc85" stroke="#c6a443" />
    <path d="M2 2.5h3" stroke="#3bb54a" strokeWidth="1.5" />
    <path d="M3 14.5V8.5q0-2 2-2h8q2 0 2 2v6h-3v-4H6v4z" fill="#7cc7ef" stroke="#3d8fc6" />
  </Icon>
);

const VideoIcon = () => (
  <Icon>
    <path d="M1.5.5h13v15h-13z" fill="#26303a" />
    <path d="M4 1h8v14H4z" fill="#3f9bd0" />
    <path d="M5 6q3-4 6 0l-3 3zM5 13q3-5 6-1z" fill="#b5552e" />
    <path d="M2.8 1v14M13.2 1v14" stroke="#dfe7ee" strokeWidth="1.2" strokeDasharray="1.5 1.5" />
    <path d="M4 8h8" stroke="#26303a" />
  </Icon>
);

const DocIcon = () => (
  <Icon>
    <path d="M2.5.5h8l3 3v12h-11z" fill="#fbfdff" stroke="#7d8fa8" />
    <path d="M4.5 4.5h5m-5 2h3m-3 2h3m-3 2h7m-7 2h7" stroke="#7ca0cf" />
    <path d="M8.5 6h3v3h-3z" fill="#2c68c0" />
  </Icon>
);

const MyDocsIcon = () => (
  <Icon>
    <path d="M1 1h6v14H1z" fill="#f1dc85" stroke="#cfae4c" strokeWidth=".7" />
    <path d="M5.5 2.5h8v12h-8z" fill="#f6f8fb" stroke="#8fa0b6" />
    <path d="M8 5.5h4m-4 2h4m-4 2h4m-4 2h4" stroke="#6f94c8" />
    <path d="M4.5 2v12" stroke="#d9b955" strokeWidth="2" />
  </Icon>
);

const PictureIcon = () => (
  <Icon>
    <path d="M.5 2.5h15v11H.5z" fill="#fff" stroke="#8791a0" />
    <path d="M2 4h12v4H2z" fill="#6fc1ee" />
    <path d="M2 8q4-2 12 1v3H2z" fill="#2b7f6a" />
  </Icon>
);

const MusicIcon = () => (
  <Icon>
    <path d="M8 12V1q1 3 4 4.5t1 4.5q0-2-4-3" stroke="#2d8ed4" strokeWidth="1.6" fill="#2d8ed4" />
    <ellipse cx="5" cy="12.5" rx="4" ry="3" fill="#3aa2e6" stroke="#1d6fb3" />
  </Icon>
);

const ComputerIcon = () => (
  <Icon>
    <path d="M2 1h12v9H2z" fill="#1b2fb8" stroke="#8b94a4" />
    <path d="M8 2h5v6H8z" fill="#7aa0f0" />
  </Icon>
);

const StartOrb = () => (
  <Icon w={40} h={38} box="0 0 38 38">
    <defs>
      <radialGradient id="start" cx="50%" cy="95%" r="85%">
        <stop offset="0" stopColor="#3fe0ff" />
        <stop offset=".45" stopColor="#1b7fb4" />
        <stop offset="1" stopColor="#1c3c62" />
      </radialGradient>
    </defs>
    <circle cx="19" cy="19" r="17.5" fill="url(#start)" stroke="#8fa9c4" />
    <path d="M4 16a15 14 0 0 1 30 0q-15 5-30 0z" fill="#fff" opacity=".28" />
    <path d="M10 11q5-3 9-1l-2 8q-4-2-8.500 0z" fill="#ee6530" />
    <path d="M20.5 11q5 3 9 1l-2 8q-4 1-8.500-1.500z" fill="#9fcf3c" />
    <path d="M8 20q4.500-2 8.500 0l-2 8q-4-2-8.500 0z" fill="#5fb4f0" />
    <path d="M18 20.500q4.500 2 8.500 1l-2 8q-4 1-8.500-1z" fill="#fcc931" />
  </Icon>
);

const ChromeIcon = () => (
  <Icon w={28}>
    <path d="M14 7h12.100A14 14 0 0 0 1.900 7l6 10.500A7 7 0 0 1 14 7z" fill="#dd3a2f" />
    <path d="M7.900 17.500L1.900 7A14 14 0 0 0 14 28l6.100-10.500a7 7 0 0 1-12.200 0z" fill="#39a84c" />
    <path d="M14 7h12.100A14 14 0 0 1 14 28l6.100-10.500A7 7 0 0 0 14 7z" fill="#fccb1c" />
    <circle cx="14" cy="14" r="6.500" fill="#f6f6f6" />
    <circle cx="14" cy="14" r="5.200" fill="#3a7dcb" />
  </Icon>
);

const SkypeIcon = () => (
  <Icon w={34}>
    <circle cx="17" cy="17" r="11" fill="#fff" />
    <FaSkype size={34} color="#00aff0" />
  </Icon>
);

const UtorrentIcon = ({ w = 32 }) => (
  <Icon w={w} box="0 0 32 32">
    <circle cx="16" cy="16" r="15.5" fill="#62b145" />
    <path d="M7 9l3 21M8.500 9.500l1.700 8q1 5.500 5.500 4.500t3.800-6L18 8M19.500 16q1 5.500 4 5t6.500-4" stroke="#fff" strokeWidth="4.5" />
  </Icon>
);

const WordIcon = () => (
  <Icon w={32}>
    <path d="M1 4q0-2 2-2h20v2H5q-1 9 4 23H1z" fill="#dfe9f8" stroke="#3c66b4" />
    <path d="M9 5l21-1-2 26-18-2z" fill="#fbfcff" stroke="#9aa9c4" />
    <path d="M1 27q6-8 2-22" stroke="#2e59b0" strokeWidth="4" />
    <path d="M11 9l2 8 3-7 2 7 3-9" stroke="#1f4aa4" strokeWidth="2.4" />
    <path d="M22 10h5m-5 4h5m-6 4h6m-15 4h14m-14 4h14" stroke="#2953a8" strokeWidth="1.8" />
  </Icon>
);

const ExplorerIcon = () => (
  <Icon w={34} h={32}>
    <path d="M2 4h9l2 2h18v22H2z" fill="#e9c95c" stroke="#b5923a" />
    <path d="M4 2h9v5H4zM12 4h9v5h-9zM20 5h10v5H20z" fill="#fdf7d8" stroke="#d0b45a" />
    <path d="M5 3.5h3" stroke="#2eae45" strokeWidth="2" />
    <path d="M13 5.5h3" stroke="#d8362c" strokeWidth="2" />
    <path d="M21 6.5h4" stroke="#2a8de0" strokeWidth="2" />
    <path d="M2 8h10l2 2h17v18H2z" fill="#f7e48e" stroke="#cfae4c" />
    <path d="M6 31V20q0-2 2-2h18q3 0 3 2v11h-5v-7H11v7z" fill="#8cd2f2" stroke="#4ba0cf" />
    <path d="M9 12v10m-5-5h10" stroke="#fff" />
  </Icon>
);

const WifiIcon = () => (
  <Icon>
    <circle cx="8" cy="8" r="7.5" fill="#a5a8ad" />
    <path d="M3 7q5-4.500 10 0M5 9.500q3-2.500 6 0" stroke="#fff" strokeWidth="1.6" />
    <circle cx="8" cy="12" r="1.3" fill="#fff" />
  </Icon>
);

const AcrobatIcon = () => (
  <Icon>
    <path d="M.5.5h15v15H.5z" fill="#281313" stroke="#d42b1e" />
    <path d="M3 14q6-5 6-11 0 5 4 5-5-1-9 5" stroke="#d9d2d2" strokeWidth="1.2" />
  </Icon>
);

const MeterIcon = () => (
  <Icon w={13} h={16}>
    <path d="M1 1h3v15H1zM6 1h3v15H6zM10.500 1h2.500v15h-2.500z" fill="#10141d" />
    <path d="M4 1v14M9 1v14" stroke="#667" />
    <path d="M6 8h2v8H6z" fill="#10e010" />
    <path d="M11 13h2v3h-2z" fill="#2ad" />
    <path d="M1 15h2" stroke="#d22" />
  </Icon>
);

const ABallIcon = () => (
  <Icon>
    <circle cx="8" cy="8" r="7.5" fill="#2f6594" />
    <text x="5" y="12" fontSize="13" fontWeight="700" fill="#fff" fontFamily="Liberation Serif">a</text>
  </Icon>
);

const SignalIcon = () => (
  <Icon>
    <path d="M1 12h2v2H1zM4 10h2v4H4zM7 8h2v6H7zM10 5h2v9h-2zM13 2h2v12h-2z" fill="#fff" />
  </Icon>
);

const PowerIcon = () => (
  <Icon>
    <path d="M3 2.5h7v12H3zM5 1h3" stroke="#fff" strokeWidth="1.6" />
    <path d="M8 3h7v5q0 2-3 3v4H9z" fill="#27365a" />
    <path d="M9.5 2v3m3.500-3v3M8 5.500h7v2q0 2-3 3v4" stroke="#fff" strokeWidth="1.4" fill="#fff" />
  </Icon>
);

const VolumeIcon = () => (
  <Icon>
    <path d="M1 5.5h2l4-4v13l-4-4H1z" fill="#fff" />
    <path d="M9.5 5q2 3 0 6M12 3.500q3.500 4.500 0 9" stroke="#fff" strokeWidth="1.2" />
  </Icon>
);

/* ---------- Data ---------- */

const TABS = ["Главная", "Вставка", "Разметка страницы", "Ссылки", "Рассылки", "Рецензирование", "Вид"];

const SERIF = '"Liberation Serif", serif';
const STYLES = [
  { name: "Выделение", font: `italic 16px ${SERIF}` },
  { name: "¶ Заголов...", font: 'bold 20px "Liberation Sans", sans-serif' },
  { name: "Название", font: `bold 20px ${SERIF}` },
  { name: "¶ Обычный", font: `16px ${SERIF}`, on: true },
  { name: "Подзагол...", font: `16px ${SERIF}` },
  { name: "Строгий", font: `bold 16px ${SERIF}` },
  { name: "¶ Без инте...", font: `16px ${SERIF}` },
];

const TREE = [
  { text: "Избранное", icon: <StarIcon />, level: 0 },
  { text: "Загрузки", icon: <DownloadsIcon />, level: 1 },
  { text: "Недавние места", icon: <RecentIcon />, level: 1 },
  { text: "Рабочий стол", icon: <MonitorIcon />, level: 1, on: true },
  { text: "Библиотеки", icon: <LibraryIcon />, level: 0, section: true },
  { text: "Видео", icon: <VideoIcon />, level: 1 },
  { text: "Документы", icon: <DocIcon />, level: 1 },
  { text: "Мои документы", icon: <MyDocsIcon />, level: 2 },
  { text: "AIMP", icon: <Folder />, level: 3 },
  { text: "Assassin's", icon: <Folder />, level: 3 },
  { text: "My Games", icon: <Folder />, level: 3 },
  { text: "NHL09", icon: <Folder />, level: 3 },
  { text: "PCSX2", icon: <Folder />, level: 3 },
  { text: "Ф12", icon: <Folder />, level: 3 },
  { text: "Общие документы", icon: <Folder />, level: 2 },
  { text: "Изображения", icon: <PictureIcon />, level: 1 },
  { text: "Музыка", icon: <MusicIcon />, level: 1 },
  { text: "Компьютер", icon: <ComputerIcon />, level: 0, section: true },
];

const ALIGNS = [
  ["По левому краю", [[0, 14], [0, 10], [0, 14], [0, 10], [0, 14], [0, 10]]],
  ["По центру", [[0, 14], [3, 8], [0, 14], [3, 8], [0, 14], [3, 8]]],
  ["По правому краю", [[0, 14], [4, 10], [0, 14], [4, 10], [0, 14], [4, 10]]],
  ["По ширине", [[0, 14], [0, 14], [0, 14], [0, 14], [0, 14], [0, 14]]],
];

const VIEWS = [
  ["page", "Разметка страницы"],
  ["read", "Режим чтения"],
  ["web", "Веб-документ"],
  ["outline", "Структура"],
  ["draft", "Черновик"],
];

/* ---------- Sections ---------- */

const RibbonGroup = ({ title, launcher, w, grow, children }) => (
  <Group $w={w} $grow={grow}>
    {children}
    <GroupLabel $launcher={launcher}>
      <LabelText>{title}</LabelText>
      {launcher && <LauncherIcon />}
    </GroupLabel>
  </Group>
);

const ClipboardGroup = () => (
  <RibbonGroup title="Буфер обмена" launcher w={190}>
    <GroupBody $pad="1px 1px 0" $gap={2}>
      <BigButton $w={54} $top={2}>
        <PasteIcon />
        Вставить
        <Arrow />
      </BigButton>
      <CommandList>
        <Command disabled><CutIcon />Вырезать</Command>
        <Command disabled><CopyIcon />Копировать</Command>
        <Command><BrushIcon />Формат по образцу</Command>
      </CommandList>
    </GroupBody>
  </RibbonGroup>
);

const FontGroup = () => (
  <RibbonGroup title="Шрифт" launcher w={260}>
    <GroupBody $stack $gap={8} $pad="9px 2px 0">
      <ToolRow>
        <ComboCell $w={124}>
          <Combo aria-label="Шрифт"><option>Times New Roman</option></Combo>
          <Arrow />
        </ComboCell>
        <ComboCell $w={58}>
          <Combo aria-label="Размер шрифта"><option>10</option></Combo>
          <Arrow />
        </ComboCell>
        <ToolSet>
          <Tool $w={21} $size={17} $gap={1}>A<RaisedArrow><ArrowUp color="#2f60ad" w={5} /></RaisedArrow></Tool>
          <Tool $w={21} $size={12} $gap={1}>A<RaisedArrow><Arrow color="#2f60ad" w={5} /></RaisedArrow></Tool>
        </ToolSet>
        <ToolSet>
          <Tool $w={22} aria-label="Очистить формат"><ClearFormatIcon /></Tool>
        </ToolSet>
      </ToolRow>
      <ToolRow>
        <ToolSet>
          <Tool $w={22}>Ж</Tool>
          <Tool $w={24}><i>К</i></Tool>
          <Tool $w={38} $gap={10}><u>Ч</u><Arrow /></Tool>
          <Tool $w={27} $size={12}><s>abc</s></Tool>
          <Tool $w={23} $gap={1}>x<SmallTwo>2</SmallTwo></Tool>
          <Tool $w={23} $gap={1}>x<SmallTwo $up>2</SmallTwo></Tool>
          <Tool $w={25} $size={14} $gap={1}>Aa<Arrow w={5} /></Tool>
        </ToolSet>
        <ToolSet>
          <Tool $w={33} aria-label="Цвет выделения"><HighlightIcon /><Arrow /></Tool>
          <Tool $w={32} aria-label="Цвет текста"><FontColorIcon /><Arrow /></Tool>
        </ToolSet>
      </ToolRow>
    </GroupBody>
  </RibbonGroup>
);

const ParagraphGroup = () => (
  <RibbonGroup title="Абзац" launcher w={209}>
    <GroupBody $stack $gap={8} $pad="9px 2px 0">
      <ToolRow>
        <ToolSet>
          <Tool $w={34} aria-label="Маркеры"><ListIcon kind="bullet" /><Arrow /></Tool>
          <Tool $w={34} $on aria-label="Нумерация"><ListIcon kind="number" /><Arrow /></Tool>
          <Tool $w={28} aria-label="Многоуровневый список"><ListIcon kind="multi" /><Arrow /></Tool>
        </ToolSet>
        <ToolSet>
          <Tool $w={21} aria-label="Уменьшить отступ"><IndentIcon flip /></Tool>
          <Tool $w={21} aria-label="Увеличить отступ"><IndentIcon /></Tool>
        </ToolSet>
        <ToolSet><Tool $w={22} aria-label="Сортировка"><SortIcon /></Tool></ToolSet>
        <ToolSet><Tool $w={22} $size={18}>¶</Tool></ToolSet>
      </ToolRow>
      <ToolRow>
        <ToolSet>
          {ALIGNS.map(([label, rows], i) => (
            <Tool key={label} $w={23} $on={i === 0} aria-label={label}><AlignIcon rows={rows} /></Tool>
          ))}
        </ToolSet>
        <ToolSet><Tool $w={29} aria-label="Интервал"><SpacingIcon /><Arrow /></Tool></ToolSet>
        <ToolSet>
          <Tool $w={32} aria-label="Заливка"><FillIcon /><Arrow /></Tool>
          <Tool $w={32} aria-label="Границы"><BorderIcon /><Arrow /></Tool>
        </ToolSet>
      </ToolRow>
    </GroupBody>
  </RibbonGroup>
);

const StylesGroup = () => (
  <RibbonGroup title="Стили" launcher grow>
    <GroupBody $pad="4px 2px 0" $gap={1}>
      <Gallery>
        {STYLES.map((s) => (
          <StyleCell key={s.name} $on={s.on}>
            <StyleTile>
              <Preview $font={s.font}>AaBbCcDd</Preview>
              <StyleName>{s.name}</StyleName>
            </StyleTile>
          </StyleCell>
        ))}
        <GalleryScroll>
          <GalleryStep disabled aria-label="Вверх"><ArrowUp color="#9a9a9a" w={6} /></GalleryStep>
          <GalleryStep aria-label="Вниз"><Arrow /></GalleryStep>
          <GalleryStep aria-label="Все стили"><BarArrow /></GalleryStep>
        </GalleryScroll>
      </Gallery>
      <BigButton $w={62} $top={2}>
        <ChangeStylesIcon />
        <span>
          Изменить
          <SplitLabel>стили<Arrow /></SplitLabel>
        </span>
      </BigButton>
    </GroupBody>
  </RibbonGroup>
);

const EditingGroup = () => (
  <RibbonGroup title="Редактирование" w={95}>
    <GroupBody $pad="1px 0 0 5px">
      <CommandList>
        <Command><FindIcon />Найти <Arrow /></Command>
        <Command><ReplaceIcon />Заменить</Command>
        <Command><SelectIcon />Выделить <Arrow /></Command>
      </CommandList>
    </GroupBody>
  </RibbonGroup>
);

const Word = () => (
  <WordWindow>
    <TitleBar>
      <QuickBar>
        <QuickPill>
          <button aria-label="Сохранить"><SaveIcon /></button>
          <button aria-label="Отменить"><UndoIcon /></button>
          <Arrow color="#8fa4cc" />
          <button aria-label="Повторить"><RedoIcon /></button>
        </QuickPill>
        <BarArrow color="#1d2f57" />
      </QuickBar>
      <WordTitle>ЛБР1.doc [Режим ограниченной функциональности] - Microsoft Word</WordTitle>
      <WordCaption>
        <CaptionGroup $dark>
          <CaptionButton $w={28} $tone="light" aria-label="Свернуть"><MinGlyph /></CaptionButton>
          <CaptionButton $w={27} $tone="light" aria-label="Восстановить"><RestoreGlyph /></CaptionButton>
          <CaptionButton $w={46} $tone="dark" aria-label="Закрыть"><CloseGlyph /></CaptionButton>
        </CaptionGroup>
      </WordCaption>
    </TitleBar>
    <OfficeButton aria-label="Office"><OfficeLogo /></OfficeButton>
    <Tabs>
      {TABS.map((t, i) => (
        <Tab key={t} href="#" $active={i === 0}>{t}</Tab>
      ))}
      <HelpLink href="#" aria-label="Справка"><HelpIcon /></HelpLink>
    </Tabs>
    <Ribbon>
      <ClipboardGroup />
      <FontGroup />
      <ParagraphGroup />
      <StylesGroup />
      <EditingGroup />
    </Ribbon>
    <DocumentArea>
      <Waves viewBox="0 0 320 200" preserveAspectRatio="none" aria-hidden="true">
        <defs>
          <linearGradient id="sky" x2="0" y2="1">
            <stop offset="0" stopColor="#b9d6f2" stopOpacity=".8" />
            <stop offset="1" stopColor="#a8c6ea" stopOpacity=".7" />
          </linearGradient>
        </defs>
        <path d="M0 0h320v30Q150 70 0 129z" fill="url(#sky)" />
        <path d="M0 158Q70 105 160 78T320 40" fill="none" stroke="#b3ccec" strokeOpacity=".35" strokeWidth="2" />
      </Waves>
      <Page>
        <Questions start={11}>
          <li>Які основні операції з об'єктами можна виконувати за допомогою програми <b>Мой компьютер?</b></li>
          <li>Що таке папка? Які є папки в ній?</li>
        </Questions>
      </Page>
      <VerticalScroll>
        <RulerIcon />
        <ScrollTrack>
          <ArrowUp color="#3d4f72" w={9} />
          <DocThumb><Grip /></DocThumb>
          <Icon w={9} h={32}><path d="M0 26h9l-4.500 5z" fill="#3d4f72" /></Icon>
        </ScrollTrack>
        <BrowseButtons>
          <Icon w={7} h={9}><path d="M3.5 0L7 4H0zM3.5 4L7 8H0z" fill="#111" /></Icon>
          <Icon w={8}><circle cx="4" cy="4" r="3" fill="#ddd" stroke="#111" /></Icon>
          <Icon w={7} h={9}><path d="M3.5 4L0 0h7zM3.5 8L0 4h7z" fill="#111" /></Icon>
        </BrowseButtons>
      </VerticalScroll>
    </DocumentArea>
    <StatusBar>
      <StatusCell>Страница: 4 из 4</StatusCell>
      <StatusCell>Число слов: 2 542</StatusCell>
      <StatusCell><ProofIcon />Украинский (Украина)</StatusCell>
      <StatusControls>
        <ViewSet>
          {VIEWS.map(([kind, label], i) => (
            <ViewButton key={kind} $on={i === 0} aria-label={label}><ViewIcon kind={kind} /></ViewButton>
          ))}
        </ViewSet>
        <ZoomText>90%</ZoomText>
        <RoundButton aria-label="Уменьшить"><ZoomIcon /></RoundButton>
        <ZoomSlider type="range" min="10" max="190" defaultValue="90" aria-label="Масштаб" />
        <RoundButton aria-label="Увеличить"><ZoomIcon plus /></RoundButton>
      </StatusControls>
    </StatusBar>
  </WordWindow>
);

const Explorer = () => (
  <ExplorerWindow>
    <ExplorerCaption>
      <CaptionGroup>
        <CaptionButton $w={28} aria-label="Свернуть"><MinGlyph /></CaptionButton>
        <CaptionButton $w={27} aria-label="Развернуть"><MaxGlyph /></CaptionButton>
        <CaptionButton $w={47} $tone="red" aria-label="Закрыть"><CloseGlyph /></CaptionButton>
      </CaptionGroup>
    </ExplorerCaption>
    <AddressRow>
      <NavButtons>
        <button aria-label="Назад"><BackIcon /></button>
        <button aria-label="Вперед"><BackIcon muted /></button>
        <Icon w={9} h={6}><path d="M.5.5h8l-4 4.500z" fill="#4fb0e8" stroke="#17335f" /></Icon>
      </NavButtons>
      <AddressBox>
        <Crumb $pad={2}><BinIcon w={16} h={17} /><CrumbArrow /></Crumb>
        <Crumb $pad={8}>Корзина<CrumbArrow /></Crumb>
        <HistoryButton aria-label="Предыдущие адреса"><Arrow color="#0b1561" w={8} /></HistoryButton>
        <RefreshButton aria-label="Обновить"><RefreshIcon /></RefreshButton>
      </AddressBox>
      <SearchBox>
        <SearchInput type="text" placeholder="Поиск: Корзина" aria-label="Поиск" />
        <SearchIcon />
      </SearchBox>
    </AddressRow>
    <ExplorerContent>
      <CommandBar>
        <BarButton>Упорядочить<Arrow color="#1e395b" w={8} /></BarButton>
        <BarButton>Очистить корзину</BarButton>
        <BarButton>Восстановить все объекты</BarButton>
        <BarTools>
          <BarButton $gap={9} aria-label="Вид"><ViewsIcon /><Arrow color="#1e395b" w={8} /></BarButton>
          <BarButton aria-label="Область просмотра"><PreviewIcon /></BarButton>
          <BarButton aria-label="Справка"><HelpIcon w={16} /></BarButton>
        </BarTools>
      </CommandBar>
      <Panes>
        <TreePane>
          <Tree>
            {TREE.map((t) => (
              <TreeItem key={t.text} $section={t.section}>
                <TreeLink href="#" $level={t.level} $on={t.on}>{t.icon}{t.text}</TreeLink>
              </TreeItem>
            ))}
          </Tree>
          <PaneScroll>
            <ArrowUp />
            <PaneThumb><Grip /></PaneThumb>
            <Arrow color="#444" w={7} />
          </PaneScroll>
        </TreePane>
        <Files>
          <FileItem>
            <BigFolder />
            <FileText>
              <span>Експериментальна</span>
              <FileType>Папка с файлами</FileType>
            </FileText>
          </FileItem>
        </Files>
      </Panes>
      <DetailsPane>
        <BinIcon w={38} h={46} />
        <DetailsText>Элемент: 1</DetailsText>
      </DetailsPane>
    </ExplorerContent>
  </ExplorerWindow>
);

const Taskbar = () => (
  <TaskBar>
    <StartButton aria-label="Пуск"><StartOrb /></StartButton>
    <TaskButton aria-label="Chrome"><ChromeIcon /></TaskButton>
    <TaskButton aria-label="Skype"><SkypeIcon /></TaskButton>
    <TaskButton $open aria-label="uTorrent"><UtorrentIcon /></TaskButton>
    <TaskButton $open aria-label="Chrome"><ChromeIcon /></TaskButton>
    <TaskStack><TaskButton $open $w={53} aria-label="Word"><WordIcon /></TaskButton></TaskStack>
    <TaskButton $open $active aria-label="Проводник"><ExplorerIcon /></TaskButton>
    <Tray>
      <TrayButton aria-label="Wi-Fi"><WifiIcon /></TrayButton>
      <TrayButton aria-label="Acrobat"><AcrobatIcon /></TrayButton>
      <TrayButton aria-label="uTorrent"><UtorrentIcon w={16} /></TrayButton>
      <TrayButton aria-label="Steam"><FaSteam size={16} color="#dfe8f4" /></TrayButton>
      <TrayButton aria-label="Nvidia"><SiNvidia size={16} color="#76b900" /></TrayButton>
      <TrayButton aria-label="Монитор"><MeterIcon /></TrayButton>
      <TrayButton aria-label="Punto"><ABallIcon /></TrayButton>
      <TrayButton aria-label="Сеть"><SignalIcon /></TrayButton>
      <TrayButton aria-label="Питание"><PowerIcon /></TrayButton>
      <TrayButton aria-label="Громкость"><VolumeIcon /></TrayButton>
      <Clock>17:39<br />07.10.2015</Clock>
      <ShowDesktop aria-label="Свернуть все окна" />
    </Tray>
  </TaskBar>
);

const App = () => (
  <Desktop>
    <GlobalStyle />
    <Word />
    <Explorer />
    <Taskbar />
  </Desktop>
);

export default App;
